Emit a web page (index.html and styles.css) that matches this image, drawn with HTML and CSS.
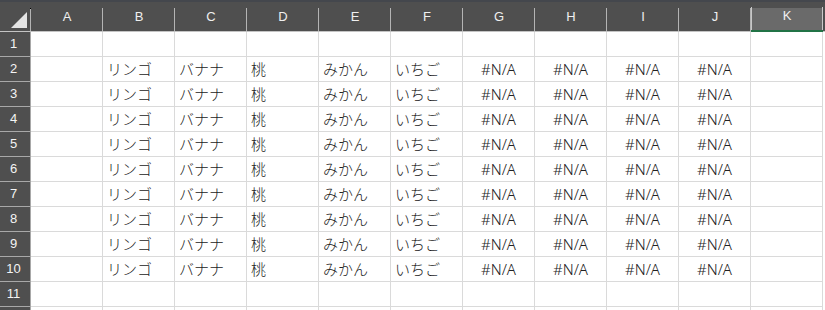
FILE: index.html
```html
<!DOCTYPE html>
<html>
<head>
  <title>Sheet1</title>
  <link rel="stylesheet" href="styles.css">
</head>
<body>
  <div class="top-strip"></div>
  <div class="sheet">
    <!-- column headers -->
    <div class="corner">
      <svg width="31" height="29" viewBox="0 0 31 29">
        <polygon points="27,10 27,26 11,26" fill="#e4e4e4"/>
        <rect x="30" y="6" width="1" height="23" fill="#b4b4b4"/>
        <rect x="30" y="6" width="1" height="1" fill="#000"/>
      </svg>
    </div>
    <div class="col-head">A</div>
    <div class="col-head">B</div>
    <div class="col-head">C</div>
    <div class="col-head">D</div>
    <div class="col-head">E</div>
    <div class="col-head">F</div>
    <div class="col-head">G</div>
    <div class="col-head">H</div>
    <div class="col-head">I</div>
    <div class="col-head">J</div>
    <div class="col-head active">K</div>
    <div class="col-head edge"></div>

    <div class="row-head">1</div>
    <div class="cell"></div><div class="cell"></div><div class="cell"></div><div class="cell"></div><div class="cell"></div><div class="cell"></div>
    <div class="cell"></div><div class="cell"></div><div class="cell"></div><div class="cell"></div><div class="cell"></div><div class="edge"></div>

    <div class="row-head">2</div>
    <div class="cell"></div><div class="cell">リンゴ</div><div class="cell">バナナ</div><div class="cell">桃</div><div class="cell">みかん</div><div class="cell">いちご</div>
    <div class="cell na">#N/A</div><div class="cell na">#N/A</div><div class="cell na">#N/A</div><div class="cell na">#N/A</div><div class="cell"></div><div class="edge"></div>

    <div class="row-head">3</div>
    <div class="cell"></div><div class="cell">リンゴ</div><div class="cell">バナナ</div><div class="cell">桃</div><div class="cell">みかん</div><div class="cell">いちご</div>
    <div class="cell na">#N/A</div><div class="cell na">#N/A</div><div class="cell na">#N/A</div><div class="cell na">#N/A</div><div class="cell"></div><div class="edge"></div>

    <div class="row-head">4</div>
    <div class="cell"></div><div class="cell">リンゴ</div><div class="cell">バナナ</div><div class="cell">桃</div><div class="cell">みかん</div><div class="cell">いちご</div>
    <div class="cell na">#N/A</div><div class="cell na">#N/A</div><div class="cell na">#N/A</div><div class="cell na">#N/A</div><div class="cell"></div><div class="edge"></div>

    <div class="row-head">5</div>
    <div class="cell"></div><div class="cell">リンゴ</div><div class="cell">バナナ</div><div class="cell">桃</div><div class="cell">みかん</div><div class="cell">いちご</div>
    <div class="cell na">#N/A</div><div class="cell na">#N/A</div><div class="cell na">#N/A</div><div class="cell na">#N/A</div><div class="cell"></div><div class="edge"></div>

    <div class="row-head">6</div>
    <div class="cell"></div><div class="cell">リンゴ</div><div class="cell">バナナ</div><div class="cell">桃</div><div class="cell">みかん</div><div class="cell">いちご</div>
    <div class="cell na">#N/A</div><div class="cell na">#N/A</div><div class="cell na">#N/A</div><div class="cell na">#N/A</div><div class="cell"></div><div class="edge"></div>

    <div class="row-head">7</div>
    <div class="cell"></div><div class="cell">リンゴ</div><div class="cell">バナナ</div><div class="cell">桃</div><div class="cell">みかん</div><div class="cell">いちご</div>
    <div class="cell na">#N/A</div><div class="cell na">#N/A</div><div class="cell na">#N/A</div><div class="cell na">#N/A</div><div class="cell"></div><div class="edge"></div>

    <div class="row-head">8</div>
    <div class="cell"></div><div class="cell">リンゴ</div><div class="cell">バナナ</div><div class="cell">桃</div><div class="cell">みかん</div><div class="cell">いちご</div>
    <div class="cell na">#N/A</div><div class="cell na">#N/A</div><div class="cell na">#N/A</div><div class="cell na">#N/A</div><div class="cell"></div><div class="edge"></div>

    <div class="row-head">9</div>
    <div class="cell"></div><div class="cell">リンゴ</div><div class="cell">バナナ</div><div class="cell">桃</div><div class="cell">みかん</div><div class="cell">いちご</div>
    <div class="cell na">#N/A</div><div class="cell na">#N/A</div><div class="cell na">#N/A</div><div class="cell na">#N/A</div><div class="cell"></div><div class="edge"></div>

    <div class="row-head">10</div>
    <div class="cell"></div><div class="cell">リンゴ</div><div class="cell">バナナ</div><div class="cell">桃</div><div class="cell">みかん</div><div class="cell">いちご</div>
    <div class="cell na">#N/A</div><div class="cell na">#N/A</div><div class="cell na">#N/A</div><div class="cell na">#N/A</div><div class="cell"></div><div class="edge"></div>

    <div class="row-head">11</div>
    <div class="cell"></div><div class="cell"></div><div class="cell"></div><div class="cell"></div><div class="cell"></div><div class="cell"></div>
    <div class="cell"></div><div class="cell"></div><div class="cell"></div><div class="cell"></div><div class="cell"></div><div class="edge"></div>

    <div class="row-head"></div>
    <div class="cell"></div><div class="cell"></div><div class="cell"></div><div class="cell"></div><div class="cell"></div><div class="cell"></div>
    <div class="cell"></div><div class="cell"></div><div class="cell"></div><div class="cell"></div><div class="cell"></div><div class="edge"></div>
  </div>
</body>
</html>
```

FILE: styles.css
```css
html, body {
  margin: 0;
  padding: 0;
  background-color: #fff;
  overflow: hidden;
}

.top-strip {
  height: 2px;
  background-color: #44474d;
}

.sheet {
  display: grid;
  grid-template-columns: 31px repeat(11, 72px) 1fr;
  grid-template-rows: 30px;
  grid-auto-rows: 25px;
  font-family: "Noto Sans", "Noto Sans CJK JP", sans-serif;
}

.sheet > div {
  box-sizing: border-box;
}

.corner {
  background-color: #4f4f4f;
  border-bottom: 1px solid #c4c4c4;
}

.corner svg {
  display: block;
}

.col-head {
  background: linear-gradient(#b4b4b4, #b4b4b4) right bottom / 1px 23px no-repeat, #4f4f4f;
  border-bottom: 1px solid #c4c4c4;
  color: #f0f0f0;
  font-family: "Liberation Sans", Arial, sans-serif;
  font-size: 13px;
  line-height: 29px;
  text-align: center;
}

.col-head.active {
  background: linear-gradient(#c8c8c8, #c8c8c8) right bottom / 1px 23px no-repeat,
              linear-gradient(#c8c8c8, #c8c8c8) left bottom / 1px 23px no-repeat,
              linear-gradient(#6a6a6a, #6a6a6a) left bottom / 100% 22px no-repeat,
              #4f4f4f;
  border-bottom: 2px solid #217346;
  line-height: 28px;
}

.col-head.edge {
  background: #4f4f4f;
}

.row-head {
  background-color: #4f4f4f;
  border-right: 1px solid #a8a8a8;
  border-bottom: 1px solid #a8a8a8;
  color: #f4f4f4;
  font-family: "Liberation Sans", Arial, sans-serif;
  font-size: 13px;
  line-height: 24px;
  text-align: center;
  padding-right: 3px;
}

.cell {
  border-right: 1px solid #dadada;
  border-bottom: 1px solid #dadada;
  color: #222;
  font-size: 15px;
  font-weight: 300;
  line-height: 24px;
  padding-left: 4px;
  white-space: nowrap;
  overflow: hidden;
}

.cell.na {
  padding-left: 0;
  text-align: center;
}

.edge {
  background-color: #fff;
}
```
